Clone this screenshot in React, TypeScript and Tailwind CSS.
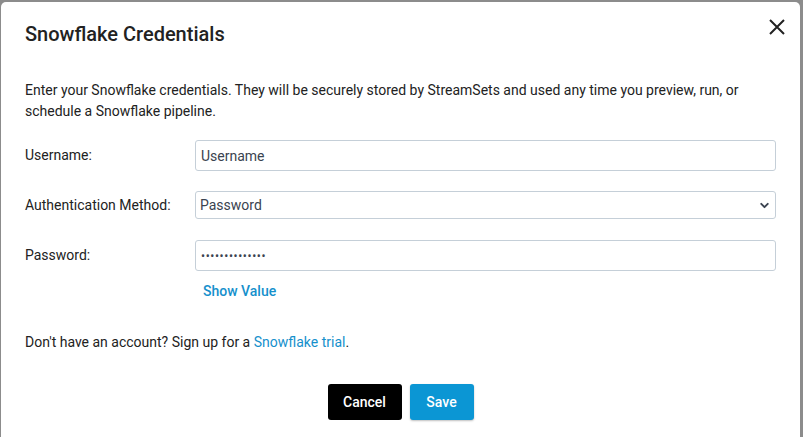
import { ChevronDown } from 'lucide-react';

export default function App() {
  return (
    <div className="h-[437px] w-[803px] overflow-hidden bg-[#8c8c8c] pt-[2px] pl-[1px] pr-[3px] font-['Roboto',sans-serif] text-[#222]">
      <div className="relative h-[440px] rounded-[5px] bg-white">
        <button className="absolute right-[15px] top-[17px] text-[#222]">
          <svg width="16" height="16" viewBox="0 0 16 16" fill="none" stroke="currentColor" strokeWidth="2">
            <path d="M1 1L15 15M15 1L1 15" />
          </svg>
        </button>

        <div className="px-[24px] pt-[18px]">
          <h1 className="text-[20px] font-medium leading-[28px]">Snowflake Credentials</h1>
        </div>

        <div className="px-[24px] pt-[32px]">
          <p className="pr-[20px] text-[14px] leading-[21px]">
            Enter your Snowflake credentials. They will be securely stored by StreamSets and used any time you preview, run, or schedule a Snowflake pipeline.
          </p>

          <div className="mt-[18px] flex items-center">
            <label className="w-[170px] text-[14px]">Username:</label>
            <input
              type="text"
              placeholder="Username"
              className="h-[31px] flex-1 rounded-[3px] border border-[#c5cfd8] px-[5px] text-[14px] text-[#3a4350] placeholder:text-[#3a4350] focus:outline-none"
            />
          </div>

          <div className="mt-[20px] flex items-center">
            <label className="w-[170px] text-[14px]">Authentication Method:</label>
            <div className="relative flex-1">
              <select className="h-[28px] w-full appearance-none rounded-[3px] border border-[#c5cfd8] bg-white px-[4px] text-[14px] text-[#3a4350] focus:outline-none">
                <option>Password</option>
                <option>Private Key</option>
              </select>
              <ChevronDown
                size={13}
                strokeWidth={3.5}
                className="pointer-events-none absolute right-[5px] top-[8px] text-[#3a4350]"
              />
            </div>
          </div>

          <div className="mt-[21px] flex items-center">
            <label className="w-[170px] text-[14px]">Password:</label>
            <input
              type="password"
              readOnly
              value="snowflakepass1"
              className="h-[31px] flex-1 rounded-[3px] border border-[#c5cfd8] px-[5px] text-[12px] tracking-[0.6px] text-[#3a4350] focus:outline-none"
            />
          </div>

          <div className="mt-[8px] pl-[178px]">
            <button className="text-[14px] font-medium leading-[20px] text-[#1590cc]">Show Value</button>
          </div>

          <p className="mt-[29px] text-[14px] leading-[20px]">
            Don't have an account? Sign up for a <a href="#" className="text-[#1590cc]">Snowflake trial</a>.
          </p>

          <div className="mt-[32px] flex justify-center gap-[8px]">
            <button className="h-[36px] w-[74px] rounded-[3px] bg-black text-[14px] font-medium text-white">Cancel</button>
            <button className="h-[36px] w-[64px] rounded-[3px] bg-[#0b96d4] text-[14px] font-medium text-white shadow-[0_1px_2px_rgba(0,0,0,0.25)]">Save</button>
          </div>
        </div>
      </div>
    </div>
  );
}
